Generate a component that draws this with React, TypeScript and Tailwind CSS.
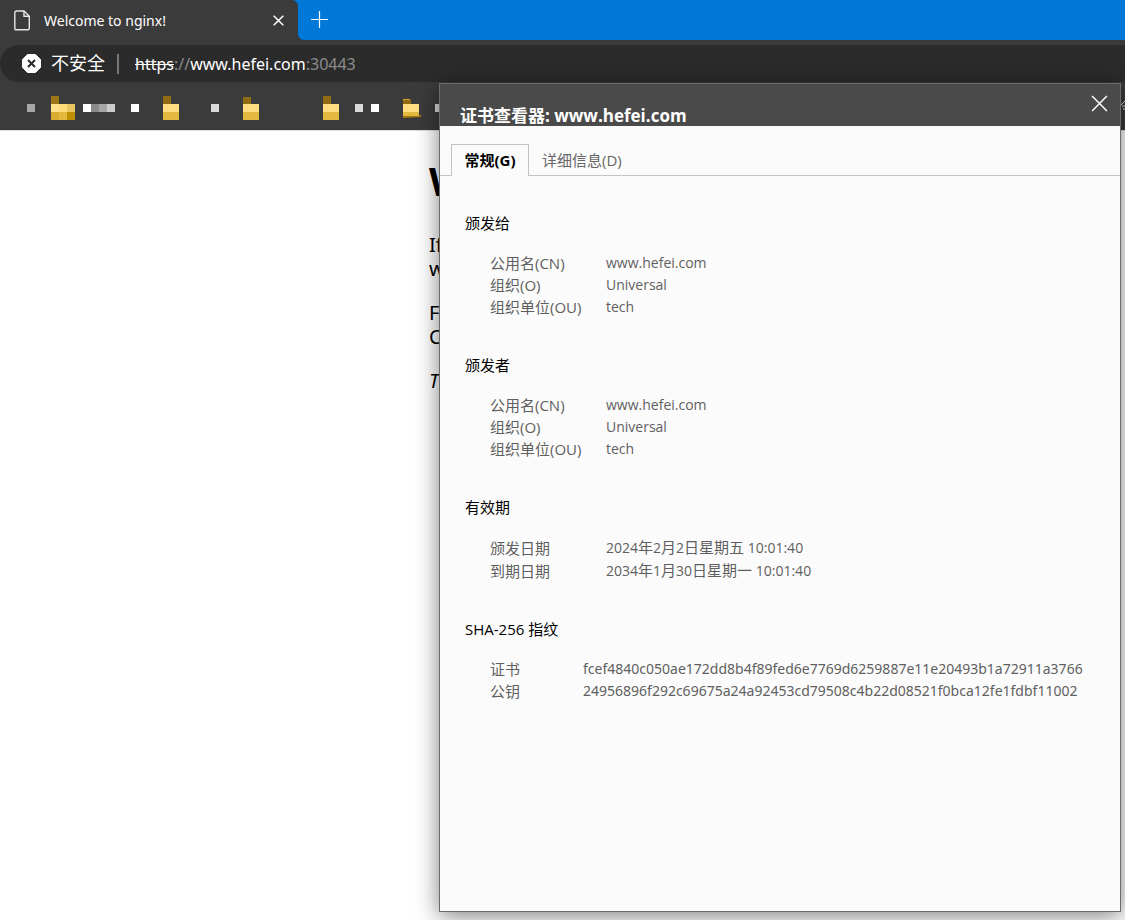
import { useState } from "react";

type Row = { label: string; value: string };
type Section = { title: string; rows: Row[]; narrow?: boolean };

const sections: Section[] = [
  {
    title: "颁发给",
    rows: [
      { label: "公用名(CN)", value: "www.hefei.com" },
      { label: "组织(O)", value: "Universal" },
      { label: "组织单位(OU)", value: "tech" },
    ],
  },
  {
    title: "颁发者",
    rows: [
      { label: "公用名(CN)", value: "www.hefei.com" },
      { label: "组织(O)", value: "Universal" },
      { label: "组织单位(OU)", value: "tech" },
    ],
  },
  {
    title: "有效期",
    rows: [
      { label: "颁发日期", value: "2024年2月2日星期五 10:01:40" },
      { label: "到期日期", value: "2034年1月30日星期一 10:01:40" },
    ],
  },
  {
    title: "SHA-256 指纹",
    narrow: true,
    rows: [
      { label: "证书", value: "fcef4840c050ae172dd8b4f89fed6e7769d6259887e11e20493b1a72911a3766" },
      { label: "公钥", value: "24956896f292c69675a24a92453cd79508c4b22d08521f0bca12fe1fdbf11002" },
    ],
  },
];

// x, y, width, height, colour
const blocks: [number, number, number, number, string][] = [
  [27, 8, 8, 8, "#a6a6a6"],
  [51, 0, 8, 8, "#9b7718"],
  [51, 8, 8, 8, "#ffe18c"],
  [59, 8, 8, 8, "#ffdc7a"],
  [67, 8, 8, 8, "#e9c660"],
  [51, 16, 8, 8, "#d9ad30"],
  [59, 16, 8, 8, "#e3b940"],
  [67, 16, 8, 8, "#c09003"],
  [83, 8, 8, 8, "#ffffff"],
  [91, 8, 8, 8, "#8a8a8a"],
  [99, 8, 8, 8, "#a6a6a6"],
  [107, 8, 8, 8, "#cccccc"],
  [131, 8, 8, 8, "#ffffff"],
  [163, 0, 8, 8, "#8f6c12"],
  [163, 8, 16, 8, "#ffdd80"],
  [163, 16, 16, 8, "#e3b940"],
  [211, 8, 8, 8, "#dadada"],
  [243, 1, 8, 7, "#8f6c12"],
  [243, 8, 16, 8, "#ffdd80"],
  [243, 16, 16, 8, "#e3b940"],
  [323, 0, 8, 8, "#8f6c12"],
  [323, 8, 16, 8, "#ffdd80"],
  [323, 16, 16, 8, "#e3b940"],
  [355, 8, 8, 8, "#dadada"],
  [371, 8, 8, 8, "#ffffff"],
  [403, 4, 8, 4, "#8f6c12"],
  [403, 3, 7, 1, "#d9a520"],
  [403, 8, 16, 8, "#ffdd80"],
  [403, 16, 16, 4, "#e3b940"],
  [435, 8, 5, 8, "#dadada"],
];

function Cross({ size }: { size: number }) {
  return (
    <svg width={size} height={size} viewBox="0 0 16 16" fill="none" stroke="currentColor">
      <path d="M1 1L15 15M15 1L1 15" strokeWidth={size > 12 ? 1.4 : 2.2} />
    </svg>
  );
}

function BrowserBar() {
  return (
    <header className="bg-[#3b3b3b] text-white">
      <div className="flex h-10 bg-[#0078d7]">
        <div className="flex w-[298px] items-center rounded-tr-md bg-[#3b3b3b] pl-3.5">
          <svg width="17" height="21" viewBox="0 0 17 21" fill="none" stroke="#e8e8e8" strokeWidth="1.4">
            <path d="M2.5 1H10L15.3 6.3V18.2Q15.3 19.8 13.8 19.8H2.4Q0.8 19.8 0.8 18.2V2.6Q0.8 1 2.5 1Z" />
            <path d="M10 1V6.3H15.3" />
          </svg>
          <span className="ml-[13px] flex-1 font-['Noto_Sans',sans-serif] text-[14px]">Welcome to nginx!</span>
          <button aria-label="关闭标签页" className="mr-3.5">
            <Cross size={11} />
          </button>
        </div>
        <div className="w-2 bg-[#3b3b3b]">
          <div className="h-10 rounded-bl-md bg-[#0078d7]" />
        </div>
        <button aria-label="新建标签页" className="ml-1 pb-px">
          <svg width="19" height="19" viewBox="0 0 19 19" stroke="#ffffff" strokeWidth="1.2">
            <path d="M9.5 1V18M1 9.5H18" />
          </svg>
        </button>
      </div>
      <div className="pt-[5px]">
        <div className="flex h-[37px] items-center rounded-l-full bg-[#2b2b2b] pl-[22px]">
          <svg width="19" height="19" viewBox="0 0 19 19">
            <path d="M5.5 0.5H13.5L18.5 5.5V13.5L13.5 18.5H5.5L0.5 13.5V5.5Z" fill="#fff" stroke="#fff" strokeLinejoin="round" />
            <path d="M6 6L13 13M13 6L6 13" stroke="#2b2b2b" strokeWidth="2" />
          </svg>
          <span className="ml-2.5 text-[18px]">不安全</span>
          <span className="mx-3 h-5 w-0.5 bg-[#777777]" />
          <a
            href="https://www.hefei.com:30443"
            className="ml-1 font-['Noto_Sans',sans-serif] text-[16px] text-[#8c8c8c]"
          >
            <span className="text-white line-through">https</span>://
            <span className="text-white">www.hefei.com</span>:30443
          </a>
        </div>
      </div>
      <div className="flex h-12 items-start justify-between pt-3.5">
        <svg width="440" height="24" viewBox="0 0 440 24">
          {blocks.map(([x, y, w, h, fill]) => (
            <rect key={`${x}-${y}`} x={x} y={y} width={w} height={h} fill={fill} />
          ))}
          <path d="M403 20H419L421 18V21L403 22Z" fill="#a57a10" />
        </svg>
        <svg width="4" height="16" viewBox="0 0 4 16" fill="none" stroke="#e0e0e0">
          <path d="M0 9L4 5M1 10H4M2 13H4" />
        </svg>
      </div>
    </header>
  );
}

// Chinese characters are set one pixel larger than the digits beside them
function Value({ text }: { text: string }) {
  return text.split(/([\u4e00-\u9fff]+)/).map((part, i) =>
    i % 2 ? (
      <span key={i} className="text-[15px]">
        {part}
      </span>
    ) : (
      part
    )
  );
}

function CertSection({ title, rows, narrow }: Section) {
  return (
    <section className="mb-9">
      <h2 className="text-black">{title}</h2>
      <table className="mt-[18px] ml-[25px] text-[#5f5f5f]">
        <tbody>
          {rows.map((row) => (
            <tr key={row.label}>
              <th scope="row" className={`${narrow ? "w-[93px]" : "w-[116px]"} p-0 text-left font-normal`}>
                {row.label}
              </th>
              <td className={`p-0 text-[14px] ${narrow ? "font-['Noto_Sans',sans-serif]" : ""}`}>
                <Value text={row.value} />
              </td>
            </tr>
          ))}
        </tbody>
      </table>
    </section>
  );
}

function CertDialog() {
  const [tab, setTab] = useState("general");
  const active = "border border-b-0 border-[#c3c3c3] bg-[#fbfbfb] font-bold text-black";
  const idle = "border border-transparent text-[#666666]";

  return (
    <div
      role="dialog"
      aria-labelledby="cert-title"
      className="absolute top-[83px] right-1 bottom-2 left-[439px] border border-[#6b6b6b] bg-[#fbfbfb] shadow-[0_4px_22px_rgba(0,0,0,0.5)]"
    >
      <div className="flex h-[42px] items-start justify-between bg-[#4a4a4a] pr-3 pl-5 text-white">
        <h1 id="cert-title" className="mt-[21px] text-[17px] leading-[22px] font-bold">
          证书查看器: www.hefei.com
        </h1>
        <button aria-label="关闭" className="mt-[11px]">
          <Cross size={17} />
        </button>
      </div>
      <div role="tablist" className="mt-[18px] flex h-8 border-b border-[#c3c3c3] pl-[11px] text-[15px]">
        <button
          role="tab"
          aria-selected={tab === "general"}
          onClick={() => setTab("general")}
          className={`-mb-px w-[78px] whitespace-nowrap ${tab === "general" ? active : idle}`}
        >
          常规(G)
        </button>
        <button
          role="tab"
          aria-selected={tab === "details"}
          onClick={() => setTab("details")}
          className={`-mb-px px-3 whitespace-nowrap ${tab === "details" ? active : idle}`}
        >
          详细信息(D)
        </button>
      </div>
      <div className="pt-9 pl-[25px] text-[15px] leading-[22px]">
        {tab === "general" && sections.map((s) => <CertSection key={s.title} {...s} />)}
      </div>
    </div>
  );
}

export default function App() {
  return (
    <div className="relative flex min-h-screen flex-col overflow-hidden bg-white font-['Open_Sans','Noto_Sans_CJK_SC',sans-serif]">
      <BrowserBar />
      <main className="flex-1 border-t border-[#dddddd] pl-[429px] font-['Noto_Sans',sans-serif] text-xl leading-6 text-black">
        <h1 className="mt-[26px] text-[40px] leading-[48px] font-bold">W</h1>
        <p className="mt-7">
          If
          <br />w
        </p>
        <p className="mt-5">
          F
          <br />C
        </p>
        <p className="mt-5 italic">T</p>
      </main>
      <CertDialog />
    </div>
  );
}
